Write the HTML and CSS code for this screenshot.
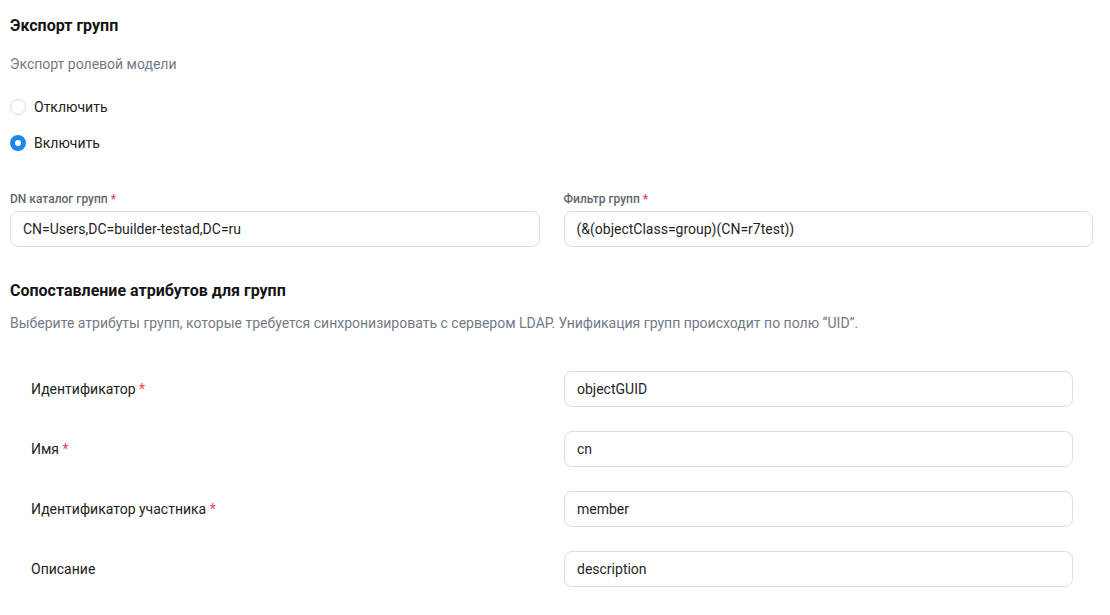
FILE: index.html
```html
<!DOCTYPE html>
<html lang="ru">
<head>
    <meta charset="UTF-8">
    <title>Экспорт групп</title>
    <link rel="stylesheet" href="styles.css">
</head>
<body>
    <div class="page">
        <h2 class="section-title">Экспорт групп</h2>
        <p class="hint hint-top">Экспорт ролевой модели</p>

        <div class="radio-group">
            <label class="radio">
                <input type="radio" name="export" value="off">
                <span class="radio-mark"></span>
                Отключить
            </label>
            <label class="radio">
                <input type="radio" name="export" value="on" checked>
                <span class="radio-mark"></span>
                Включить
            </label>
        </div>

        <div class="fields">
            <div class="field">
                <label class="field-label">DN каталог групп <span class="req">*</span></label>
                <input type="text" class="text-input" value="CN=Users,DC=builder-testad,DC=ru">
            </div>
            <div class="field">
                <label class="field-label">Фильтр групп <span class="req">*</span></label>
                <input type="text" class="text-input" value="(&amp;(objectClass=group)(CN=r7test))">
            </div>
        </div>

        <h2 class="section-title section-second">Сопоставление атрибутов для групп</h2>
        <p class="hint">Выберите атрибуты групп, которые требуется синхронизировать с сервером LDAP. Унификация групп происходит по полю “UID”.</p>

        <div class="mapping">
            <div class="map-row">
                <span class="map-label">Идентификатор <span class="req">*</span></span>
                <input type="text" class="text-input" value="objectGUID">
            </div>
            <div class="map-row">
                <span class="map-label">Имя <span class="req">*</span></span>
                <input type="text" class="text-input" value="cn">
            </div>
            <div class="map-row">
                <span class="map-label">Идентификатор участника <span class="req">*</span></span>
                <input type="text" class="text-input" value="member">
            </div>
            <div class="map-row">
                <span class="map-label">Описание</span>
                <input type="text" class="text-input" value="description">
            </div>
        </div>
    </div>
</body>
</html>
```

FILE: styles.css
```css
/* Reset default margin and padding */
* {
    margin: 0;
    padding: 0;
    box-sizing: border-box;
}

body {
    font-family: Roboto, "Noto Sans", Arial, sans-serif;
    background-color: #FFF;
    color: #1F1F1F;
    font-size: 14px;
}

.page {
    width: 1083px;
    margin-left: 10px;
    padding-top: 14px;
}

.section-title {
    font-size: 16px;
    line-height: 24px;
    font-weight: 700;
    color: #141414;
}

.section-second {
    margin-top: 32px;
}

.hint {
    font-size: 14px;
    line-height: 20px;
    color: #737A85;
    margin-top: 10px;
}

.hint-top {
    margin-top: 16px;
}

/* Radio buttons */
.radio-group {
    display: flex;
    flex-direction: column;
    gap: 12px;
    margin-top: 21px;
}

.radio {
    display: flex;
    align-items: center;
    gap: 8px;
    line-height: 24px;
    font-size: 14px;
    color: #222;
    cursor: pointer;
}

.radio input {
    display: none;
}

.radio-mark {
    width: 16px;
    height: 16px;
    border-radius: 50%;
    border: 1px solid #D9D9D9;
    background-color: #FFF;
}

.radio input:checked + .radio-mark {
    border: 5px solid #1A88EE;
    background-color: #FFF;
}

/* Fields */
.fields {
    display: grid;
    grid-template-columns: 1fr 1fr;
    gap: 24px;
    margin-top: 36px;
}

.field {
    display: flex;
    flex-direction: column;
    gap: 4px;
}

.field-label {
    font-size: 12px;
    line-height: 16px;
    font-weight: 500;
    color: #5F6670;
}

.req {
    color: #E5484D;
}

.text-input {
    width: 100%;
    height: 36px;
    padding: 0 12px;
    border: 1px solid #DCDFE3;
    border-radius: 8px;
    font-family: inherit;
    font-size: 14px;
    color: #1F1F1F;
    background-color: #FFF;
    outline: none;
}

/* Attribute mapping */
.mapping {
    display: flex;
    flex-direction: column;
    gap: 24px;
    margin-top: 38px;
}

.map-row {
    display: grid;
    grid-template-columns: 1fr 1fr;
    gap: 24px;
    align-items: center;
    padding: 0 20px 0 21px;
}

.map-label {
    font-size: 14px;
    color: #222;
}
```
